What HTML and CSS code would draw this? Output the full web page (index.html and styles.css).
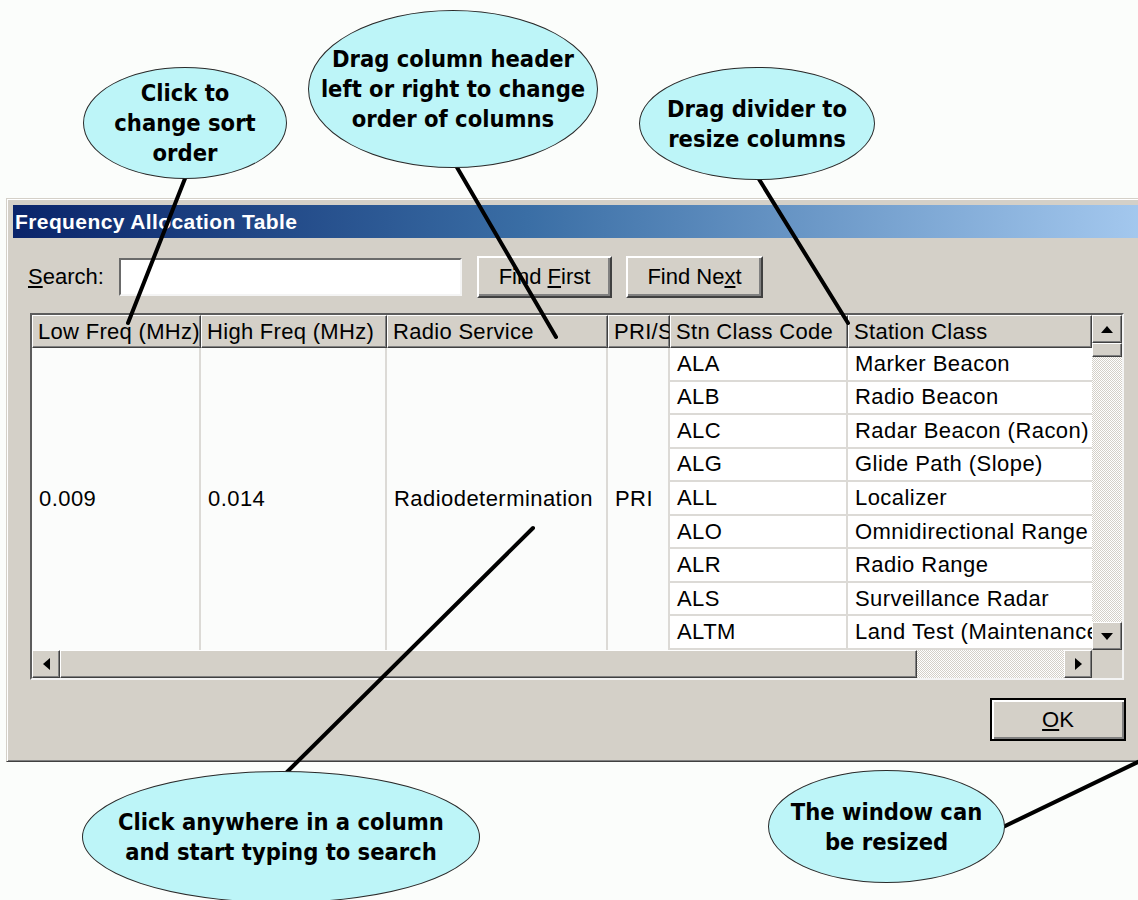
FILE: index.html
```html
<!DOCTYPE html>
<html lang="en">
<head>
  <meta charset="UTF-8">
  <meta name="viewport" content="width=device-width, initial-scale=1.0">
  <title>Frequency Allocation Table</title>
  <link rel="stylesheet" href="styles.css">
</head>
<body>
  <div class="window">
    <div class="titlebar">Frequency Allocation Table</div>

    <div class="search-row">
      <label for="search" class="search-label"><u>S</u>earch:</label>
      <input type="text" id="search" class="search-input">
      <button class="btn btn-first">Find <u>F</u>irst</button>
      <button class="btn btn-next">Find Ne<u>x</u>t</button>
    </div>

    <div class="table-frame">
      <div class="table-head">
        <div class="th">Low Freq (MHz)</div>
        <div class="th">High Freq (MHz)</div>
        <div class="th">Radio Service</div>
        <div class="th">PRI/Sec</div>
        <div class="th">Stn Class Code</div>
        <div class="th">Station Class</div>
      </div>

      <div class="vscroll">
        <div class="sb-btn">
          <svg width="12" height="7" viewBox="0 0 12 7"><polygon points="0,7 6,0 12,7" fill="#000"/></svg>
        </div>
        <div class="sb-thumb sb-thumb-v"></div>
        <div class="sb-track"></div>
        <div class="sb-btn">
          <svg width="12" height="7" viewBox="0 0 12 7"><polygon points="0,0 12,0 6,7" fill="#000"/></svg>
        </div>
      </div>

      <div class="table-body">
        <div class="td merged">0.009</div>
        <div class="td merged">0.014</div>
        <div class="td merged">Radiodetermination</div>
        <div class="td merged">PRI</div>

        <div class="td code">ALA</div><div class="td cls">Marker Beacon</div>
        <div class="td code">ALB</div><div class="td cls">Radio Beacon</div>
        <div class="td code">ALC</div><div class="td cls">Radar Beacon (Racon)</div>
        <div class="td code">ALG</div><div class="td cls">Glide Path (Slope)</div>
        <div class="td code">ALL</div><div class="td cls">Localizer</div>
        <div class="td code">ALO</div><div class="td cls">Omnidirectional Range</div>
        <div class="td code">ALR</div><div class="td cls">Radio Range</div>
        <div class="td code">ALS</div><div class="td cls">Surveillance Radar</div>
        <div class="td code">ALTM</div><div class="td cls">Land Test (Maintenance)</div>
      </div>

      <div class="hscroll">
        <div class="sb-btn">
          <svg width="7" height="12" viewBox="0 0 7 12"><polygon points="7,0 7,12 0,6" fill="#000"/></svg>
        </div>
        <div class="sb-thumb sb-thumb-h"></div>
        <div class="sb-track"></div>
        <div class="sb-btn">
          <svg width="7" height="12" viewBox="0 0 7 12"><polygon points="0,0 7,6 0,12" fill="#000"/></svg>
        </div>
      </div>
      <div class="corner"></div>
    </div>

    <div class="footer">
      <button class="btn btn-ok"><u>O</u>K</button>
    </div>
  </div>

  <!-- pointer lines from the callouts -->
  <svg class="pointers" width="1138" height="900" viewBox="0 0 1138 900">
    <g stroke="#000" stroke-width="4" stroke-linecap="round">
      <line x1="186" y1="176" x2="128" y2="323"/>
      <line x1="455" y1="164" x2="556" y2="337"/>
      <line x1="757" y1="176" x2="848" y2="323"/>
      <line x1="533" y1="528" x2="283" y2="776"/>
      <line x1="1001" y1="828" x2="1142" y2="760"/>
    </g>
  </svg>

  <div class="callout callout-sort">Click to<br>change sort<br>order</div>
  <div class="callout callout-drag">Drag column header<br>left or right to change<br>order of columns</div>
  <div class="callout callout-resize">Drag divider to<br>resize columns</div>
  <div class="callout callout-search">Click anywhere in a column<br>and start typing to search</div>
  <div class="callout callout-window">The window can<br>be resized</div>
</body>
</html>
```

FILE: styles.css
```css
html, body {
  margin: 0;
  padding: 0;
  overflow: hidden;
}

body {
  position: relative;
  width: 1138px;
  height: 900px;
  background-color: #fbfdfb;
  font-family: "Liberation Sans", Arial, sans-serif;
  font-size: 22px;
  color: #000;
}

/* dialog window */
.window {
  box-sizing: border-box;
  width: 1150px;
  margin: 198px 0 0 6px;
  padding: 6px 0 6px 6px;
  background-color: #d4d0c8;
  border: 1px solid #d4d0c8;
  border-bottom-color: #404040;
  box-shadow: inset 1px 1px #fff, inset 0 -1px #808080;
}

.titlebar {
  height: 33px;
  line-height: 33px;
  padding-left: 2px;
  font-size: 21px;
  font-weight: bold;
  letter-spacing: 0.4px;
  color: #fff;
  background: linear-gradient(90deg, #0a246a 0%, #3a6ea5 45%, #a6caf0 100%);
}

.search-row {
  display: flex;
  align-items: center;
  height: 42px;
  margin-top: 18px;
  padding-left: 15px;
}

.search-label {
  width: 91px;
  font-size: 22px;
}

.search-input {
  box-sizing: border-box;
  width: 343px;
  height: 38px;
  margin: 0 15px 0 0;
  padding: 0 4px;
  font: 22px "Liberation Sans", Arial, sans-serif;
  background: #fff;
  border: 2px solid;
  border-color: #6a6a6a #f4f4f4 #f4f4f4 #6a6a6a;
  outline: none;
}

.btn {
  box-sizing: border-box;
  height: 42px;
  padding: 0;
  font: 22px "Liberation Sans", Arial, sans-serif;
  color: #000;
  background-color: #d4d0c8;
  border: 2px solid;
  border-color: #fff #404040 #404040 #fff;
  box-shadow: inset -2px -2px #808080;
}

.btn-first {
  width: 135px;
  margin-right: 14px;
}

.btn-next {
  width: 137px;
}

/* list view */
.table-frame {
  box-sizing: border-box;
  display: grid;
  grid-template-columns: 1060px 30px;
  grid-template-rows: 33px 302px 28px;
  width: 1094px;
  height: 367px;
  margin: 15px 0 0 17px;
  border: 2px solid;
  border-color: #5c5c5c #f4f4f4 #f4f4f4 #5c5c5c;
}

.table-head,
.table-body {
  display: grid;
  grid-template-columns: 169px 186px 221px 62px 178px 244px;
  letter-spacing: 0.3px;
}

.th {
  box-sizing: border-box;
  padding-left: 5px;
  line-height: 31px;
  white-space: nowrap;
  overflow: hidden;
  background-color: #d4d0c8;
  border-top: 1px solid #fff;
  border-left: 1px solid #fff;
  border-right: 1px solid #404040;
  border-bottom: 1px solid #404040;
  box-shadow: inset -1px -1px #808080;
}

.vscroll {
  grid-row: 1 / 3;
  grid-column: 2;
  display: flex;
  flex-direction: column;
}

.table-body {
  grid-template-rows: repeat(9, 1fr);
  grid-row: 2;
  grid-column: 1;
  letter-spacing: 0.45px;
}

.td {
  box-sizing: border-box;
  display: flex;
  align-items: center;
  padding-left: 7px;
  white-space: nowrap;
  overflow: hidden;
  border-right: 2px solid #dcdad6;
}

.merged {
  grid-row: 1 / -1;
  background-color: #fbfcfb;
}

.code,
.cls {
  background-color: #fff;
  border-bottom: 2px solid #dcdad6;
}

.cls {
  border-right: none;
}

/* scroll bars */
.sb-btn {
  box-sizing: border-box;
  display: flex;
  align-items: center;
  justify-content: center;
  flex: 0 0 28px;
  background-color: #d4d0c8;
  border: 1px solid;
  border-color: #fff #404040 #404040 #fff;
  box-shadow: inset -1px -1px #808080;
}

.sb-thumb {
  box-sizing: border-box;
  background-color: #d4d0c8;
  border: 1px solid;
  border-color: #fff #404040 #404040 #fff;
  box-shadow: inset -1px -1px #808080;
}

.sb-thumb-v {
  flex: 0 0 14px;
}

.sb-thumb-h {
  flex: 0 0 857px;
}

.sb-track {
  flex: 1;
  background-color: #e8e6e2;
  background-image: repeating-conic-gradient(#d4d0c8 0 25%, #fff 0 50%);
  background-size: 2px 2px;
}

.hscroll {
  grid-row: 3;
  grid-column: 1;
  display: flex;
}

.corner {
  grid-row: 3;
  grid-column: 2;
  background-color: #d4d0c8;
}

.footer {
  display: flex;
  justify-content: flex-end;
  height: 43px;
  margin: 18px 0 14px;
  padding-right: 29px;
}

.btn-ok {
  width: 136px;
  height: 43px;
  border: 2px solid #000;
  box-shadow: inset 2px 2px #fff, inset -2px -2px #808080;
}

/* annotations */
.pointers {
  position: absolute;
  top: 0;
  left: 0;
  pointer-events: none;
}

.callout {
  position: absolute;
  box-sizing: border-box;
  display: flex;
  align-items: center;
  justify-content: center;
  text-align: center;
  white-space: nowrap;
  font-family: "Liberation Sans Narrow", "DejaVu Sans Condensed", "Liberation Sans", sans-serif;
  font-weight: bold;
  font-size: 23.5px;
  line-height: 30px;
  color: #000;
  background-color: #bdf5f8;
  border: 1.5px solid #2a2a2a;
  border-radius: 50%;
}

.callout-sort {
  left: 83px;
  top: 67px;
  width: 204px;
  height: 112px;
}

.callout-drag {
  left: 308px;
  top: 10px;
  width: 290px;
  height: 158px;
}

.callout-resize {
  left: 639px;
  top: 67px;
  width: 236px;
  height: 113px;
}

.callout-search {
  left: 82px;
  top: 771px;
  width: 398px;
  height: 132px;
}

.callout-window {
  left: 768px;
  top: 770px;
  width: 237px;
  height: 113px;
}
```
